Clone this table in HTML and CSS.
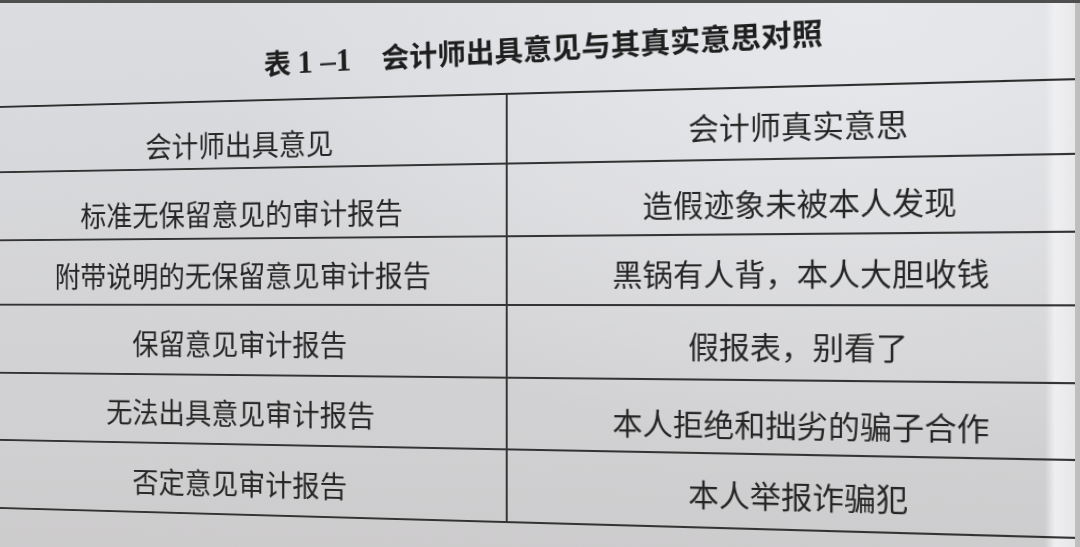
FILE: index.html
```html
<!DOCTYPE html>
<html lang="zh-CN">
<head>
<meta charset="utf-8">
<title>表1-1 会计师出具意见与其真实意思对照</title>
<link rel="stylesheet" href="styles.css">
</head>
<body>
<div class="viewport">
  <div class="sheet">
    <div class="title"><span class="t-no">表</span><span class="t-digits">1 –1</span><span class="t-name">会计师出具意见与其真实意思对照</span></div>
    <div class="table">
      <div class="row head">
        <div class="cell l">会计师出具意见</div>
        <div class="cell r">会计师真实意思</div>
      </div>
      <div class="row r1">
        <div class="cell l">标准无保留意见的审计报告</div>
        <div class="cell r">造假迹象未被本人发现</div>
      </div>
      <div class="row r2">
        <div class="cell l">附带说明的无保留意见审计报告</div>
        <div class="cell r">黑锅有人背，本人大胆收钱</div>
      </div>
      <div class="row r3">
        <div class="cell l">保留意见审计报告</div>
        <div class="cell r">假报表，别看了</div>
      </div>
      <div class="row r4">
        <div class="cell l">无法出具意见审计报告</div>
        <div class="cell r">本人拒绝和拙劣的骗子合作</div>
      </div>
      <div class="row r5">
        <div class="cell l">否定意见审计报告</div>
        <div class="cell r">本人举报诈骗犯</div>
      </div>
    </div>
  </div>
</div>
</body>
</html>
```

FILE: styles.css
```css
html, body {
  margin: 0;
  padding: 0;
  background: #c4c4c4;
}

.viewport {
  width: 1080px;
  height: 544px;
  border-top: 3px solid #4e4e4e;
  overflow: hidden;
  background: linear-gradient(90deg, #d2d2d4 0%, #d2d2d4 96%, #bdbdbd 100%);
}

.sheet {
  width: 1113px;
  height: 680px;
  margin-top: -43px;
  margin-left: -63px;
  overflow: hidden;
  box-sizing: border-box;
  background:
    linear-gradient(90deg, rgba(255,255,255,0) 0%, rgba(255,255,255,0) 97.6%, rgba(240,240,242,0.95) 98.4%, rgba(232,232,234,0.95) 100%),
    radial-gradient(ellipse at 82% 8%, rgba(232,233,236,0.95) 0%, rgba(232,233,236,0) 50%),
    linear-gradient(180deg, #dcdde1 0%, #d8d9dc 25%, #d3d3d5 55%, #cbc9ca 100%);
  transform-origin: 603px 340px;
  transform: perspective(1500px) rotateY(-10.6deg);
  font-family: "Noto Sans CJK SC", "Noto Sans", sans-serif;
  color: #262626;
}

.title {
  margin-top: 76px;
  margin-left: 312px;
  height: 36px;
  line-height: 36px;
  font-size: 29.5px;
  font-weight: 700;
  white-space: nowrap;
  color: #1e1e1e;
  transform-origin: 0 50%;
  transform: rotate(-1.4deg);
}

.t-digits {
  margin-left: 7px;
  font-family: "Liberation Serif", "Noto Sans CJK SC", serif;
  font-size: 33px;
  font-weight: 700;
}

.t-name {
  margin-left: 32px;
}

.table {
  margin-top: 20px;
  width: 1142px;
  border-top: 2px solid #2e2e2e;
}

.row {
  display: grid;
  grid-template-columns: 570px 572px;
  border-bottom: 2px solid #333;
}

.row.head { height: 68px; }
.row.r1 { height: 71px; }
.row.r2 { height: 67px; }
.row.r3 { height: 71px; }
.row.r4 { height: 70px; }
.row.r5 { height: 71px; }

.cell {
  display: flex;
  align-items: center;
  justify-content: center;
  padding-top: 6px;
  box-sizing: border-box;
  white-space: nowrap;
  line-height: 1;
}

.cell.l {
  font-size: 29.5px;
  border-right: 2px solid #333;
}

.cell.r {
  font-size: 30px;
  padding-top: 4px;
}

.row.head .cell.l { padding-top: 20px; }
.row.r1 .cell.l { padding-top: 20px; }
.row.r1 .cell.r { padding-top: 10px; }
.row.r4 .cell.r { padding-top: 12px; }
```
